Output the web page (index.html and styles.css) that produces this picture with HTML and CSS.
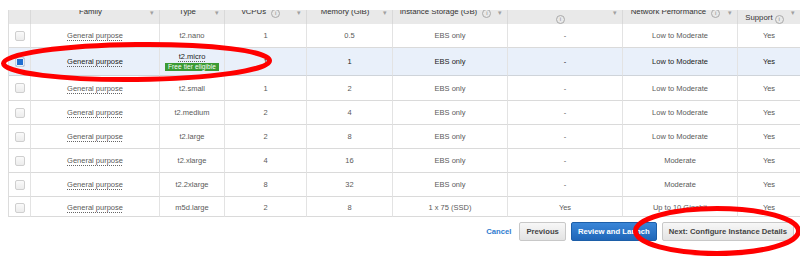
FILE: index.html
```html
<!DOCTYPE html>
<html>
<head>
<meta charset="utf-8">
<link rel="stylesheet" href="styles.css">
</head>
<body>
<div class="page">
  <div class="grid">
    <div class="th"></div>
    <div class="th"><span class="lbl">Family</span><span class="caret">▾</span></div>
    <div class="th"><span class="lbl">Type</span><span class="caret">▾</span></div>
    <div class="th"><span class="lbl">vCPUs <span class="info">i</span></span><span class="caret">▾</span></div>
    <div class="th"><span class="lbl">Memory (GiB)</span><span class="caret">▾</span></div>
    <div class="th"><span class="lbl">Instance Storage (GB) <span class="info">i</span></span><span class="caret">▾</span></div>
    <div class="th"><span class="lbl low"><span class="info">i</span></span><span class="caret">▾</span></div>
    <div class="th"><span class="lbl">Network Performance <span class="info">i</span></span><span class="caret">▾</span></div>
    <div class="th last"><span class="lbl low">Support <span class="info">i</span></span><span class="caret">▾</span></div>

    <div class="td"><span class="cb"></span></div>
    <div class="td"><span class="dot">General purpose</span></div>
    <div class="td">t2.nano</div>
    <div class="td">1</div>
    <div class="td">0.5</div>
    <div class="td">EBS only</div>
    <div class="td">-</div>
    <div class="td">Low to Moderate</div>
    <div class="td last">Yes</div>

    <div class="td sel"><span class="cb on"></span></div>
    <div class="td sel"><span class="dot">General purpose</span></div>
    <div class="td sel"><span class="dot">t2.micro</span><span class="badge">Free tier eligible</span></div>
    <div class="td sel">1</div>
    <div class="td sel">1</div>
    <div class="td sel">EBS only</div>
    <div class="td sel">-</div>
    <div class="td sel">Low to Moderate</div>
    <div class="td sel last">Yes</div>

    <div class="td"><span class="cb"></span></div>
    <div class="td"><span class="dot">General purpose</span></div>
    <div class="td">t2.small</div>
    <div class="td">1</div>
    <div class="td">2</div>
    <div class="td">EBS only</div>
    <div class="td">-</div>
    <div class="td">Low to Moderate</div>
    <div class="td last">Yes</div>

    <div class="td"><span class="cb"></span></div>
    <div class="td"><span class="dot">General purpose</span></div>
    <div class="td">t2.medium</div>
    <div class="td">2</div>
    <div class="td">4</div>
    <div class="td">EBS only</div>
    <div class="td">-</div>
    <div class="td">Low to Moderate</div>
    <div class="td last">Yes</div>

    <div class="td"><span class="cb"></span></div>
    <div class="td"><span class="dot">General purpose</span></div>
    <div class="td">t2.large</div>
    <div class="td">2</div>
    <div class="td">8</div>
    <div class="td">EBS only</div>
    <div class="td">-</div>
    <div class="td">Low to Moderate</div>
    <div class="td last">Yes</div>

    <div class="td"><span class="cb"></span></div>
    <div class="td"><span class="dot">General purpose</span></div>
    <div class="td">t2.xlarge</div>
    <div class="td">4</div>
    <div class="td">16</div>
    <div class="td">EBS only</div>
    <div class="td">-</div>
    <div class="td">Moderate</div>
    <div class="td last">Yes</div>

    <div class="td"><span class="cb"></span></div>
    <div class="td"><span class="dot">General purpose</span></div>
    <div class="td">t2.2xlarge</div>
    <div class="td">8</div>
    <div class="td">32</div>
    <div class="td">EBS only</div>
    <div class="td">-</div>
    <div class="td">Moderate</div>
    <div class="td last">Yes</div>

    <div class="td end"><span class="cb"></span></div>
    <div class="td end"><span class="dot">General purpose</span></div>
    <div class="td end">m5d.large</div>
    <div class="td end">2</div>
    <div class="td end">8</div>
    <div class="td end">1 x 75 (SSD)</div>
    <div class="td end">Yes</div>
    <div class="td end">Up to 10 Gigabit</div>
    <div class="td end last">Yes</div>
  </div>

  <div class="actions">
    <span class="cancel">Cancel</span>
    <span class="btn">Previous</span>
    <span class="btn primary">Review and Launch</span>
    <span class="btn">Next: Configure Instance Details</span>
  </div>

  <svg class="marks" width="800" height="259" viewBox="0 0 800 259">
    <ellipse cx="136.5" cy="62" rx="133" ry="17.5" fill="none" stroke="#ff0000" stroke-width="5" transform="rotate(-0.6 136.5 62)"/>
    <ellipse cx="717" cy="231" rx="81.5" ry="22.5" fill="none" stroke="#ff0000" stroke-width="5"/>
  </svg>
</div>
</body>
</html>
```

FILE: styles.css
```css
html, body {
  margin: 0;
  padding: 0;
  background: #ffffff;
  overflow: hidden;
}

.page {
  position: relative;
  width: 800px;
  height: 259px;
  padding-top: 10px;
  box-sizing: border-box;
  font-family: "Liberation Sans", Arial, sans-serif;
  font-size: 7.5px;
  color: #5a5a5a;
}

.grid {
  display: grid;
  margin-left: 8px;
  border-left: 1px solid #dcdcdc;
  grid-template-columns: 22px 129px 65px 82px 86px 115px 115px 115px 62px;
  grid-template-rows: 14px 24px 28px 25px 24px 24px 24px 24px 20px;
}

.th {
  display: flex;
  align-items: flex-start;
  height: 14px;
  overflow: hidden;
  background: #e9e9e9;
  border-right: 1px solid #d9d9d9;
  box-sizing: border-box;
  color: #333;
  font-size: 7.8px;
}

.th .lbl {
  flex: 1;
  text-align: center;
  line-height: 12px;
  margin-top: -4px;
  white-space: nowrap;
}

.th .lbl.low {
  margin-top: 2px;
}

.th .caret {
  width: 9px;
  font-size: 7px;
  line-height: 8px;
  color: #a0a0a0;
  margin-top: -1px;
}

.th.last {
  border-right: none;
}

.info {
  display: inline-block;
  width: 7px;
  height: 7px;
  border: 1px solid #a9a9a9;
  border-radius: 50%;
  font-size: 6px;
  line-height: 7px;
  text-align: center;
  color: #888;
  vertical-align: -1px;
  margin-left: 3px;
}

.lbl.low .info {
  margin-left: 0;
}

.td {
  display: flex;
  flex-direction: column;
  align-items: center;
  justify-content: center;
  border-right: 1px solid #e3e3e3;
  border-bottom: 1px solid #dadada;
  box-sizing: border-box;
  white-space: nowrap;
}

.td.last {
  border-right: none;
}

.td.end {
  padding-top: 2px;
}

.td.sel {
  background: #e9f0fa;
  color: #222;
  border-bottom-color: #cfd4da;
}

.dot {
  color: inherit;
  text-decoration-line: underline;
  text-decoration-style: dotted;
  text-decoration-color: #666;
  text-underline-offset: 2px;
}

.cb {
  display: block;
  width: 10px;
  height: 10px;
  box-sizing: border-box;
  border: 1px solid #cfcfcf;
  border-radius: 2px;
  background: linear-gradient(#fafafa, #ececec);
}

.cb.on {
  border-color: #c4cfdc;
  background: #1f6fd2;
  box-shadow: inset 0 0 0 1px #e8eef6;
}

.badge {
  margin-top: 2px;
  background: #3b9b34;
  color: #ffffff;
  font-size: 6.5px;
  line-height: 8px;
  padding: 0 3px;
  letter-spacing: 0.1px;
}

.actions {
  display: flex;
  justify-content: flex-end;
  align-items: center;
  margin-top: 5px;
  padding-right: 6px;
  gap: 5px;
  height: 19px;
}

.cancel {
  color: #2f7ccf;
  font-weight: bold;
  font-size: 7.7px;
  margin-right: 3px;
}

.btn {
  display: flex;
  align-items: center;
  height: 19px;
  box-sizing: border-box;
  padding: 0 6px;
  border: 1px solid #c8c8c8;
  border-radius: 2px;
  background: linear-gradient(#f7f7f7, #e3e3e3);
  color: #444;
  font-weight: bold;
  font-size: 7.7px;
  white-space: nowrap;
}

.btn.primary {
  background: linear-gradient(#3a86d8, #1f66b8);
  border-color: #1c5ea8;
  color: #ffffff;
}

.marks {
  position: absolute;
  left: 0;
  top: 0;
  pointer-events: none;
}
```
